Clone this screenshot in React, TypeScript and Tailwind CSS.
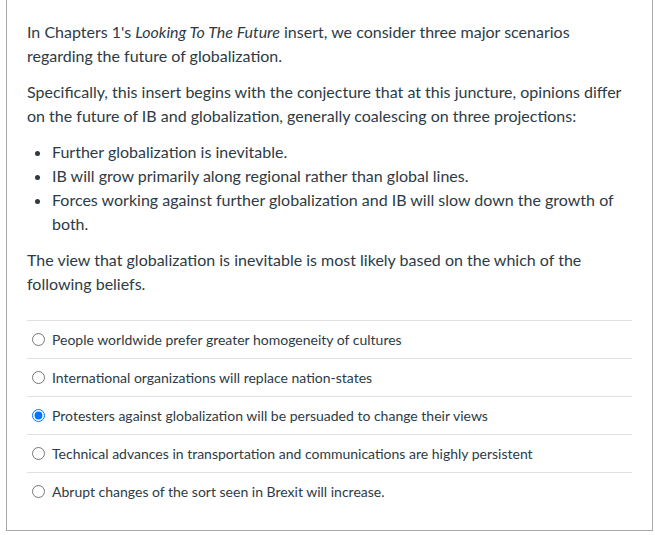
import React from "react";

const options = [
  "People worldwide prefer greater homogeneity of cultures",
  "International organizations will replace nation-states",
  "Protesters against globalization will be persuaded to change their views",
  "Technical advances in transportation and communications are highly persistent",
  "Abrupt changes of the sort seen in Brexit will increase.",
];

export default function App() {
  return (
    <div className="w-[655px] h-[535px] bg-white overflow-hidden" style={{ fontFamily: "Lato, 'Noto Sans', sans-serif" }}>
      <div className="ml-[6px] w-[647px] border-x border-b border-[#a8a8a8] pt-[20px] pb-[20px] px-[20px] text-[#2d3b45]">
        <div className="text-[16px] leading-[24px]">
          <p>
            In Chapters 1's <em>Looking To The Future</em> insert, we consider three major scenarios regarding the future of globalization.
          </p>
          <p className="mt-[12px]">
            Specifically, this insert begins with the conjecture that at this juncture, opinions differ on the future of IB and globalization, generally coalescing on three projections:
          </p>
          <ul className="mt-[12px] list-disc pl-[25px]">
            <li>Further globalization is inevitable.</li>
            <li>IB will grow primarily along regional rather than global lines.</li>
            <li>Forces working against further globalization and IB will slow down the growth of both.</li>
          </ul>
          <p className="mt-[12px]">
            The view that globalization is inevitable is most likely based on the which of the following beliefs.
          </p>
        </div>
        <div className="mt-[24px] text-[14px]">
          {options.map((o, i) => (
            <label key={i} className="flex items-center h-[38px] border-t border-[#e0e0e0]">
              <input
                type="radio"
                name="q"
                readOnly
                checked={i === 2}
                className="m-0 ml-[5px] w-[13px] h-[13px]"
              />
              <span className="ml-[7px]">{o}</span>
            </label>
          ))}
        </div>
      </div>
    </div>
  );
}
